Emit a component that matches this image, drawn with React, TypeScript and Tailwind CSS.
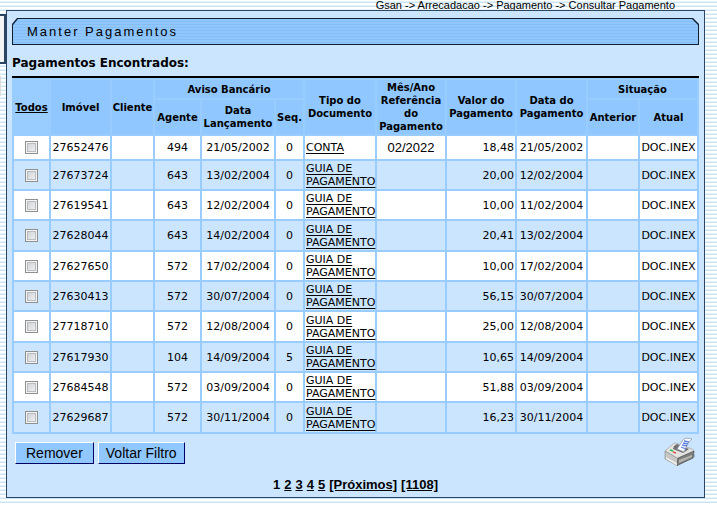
import { useState } from "react";

type Row = {
  imovel: string;
  agente: string;
  lancamento: string;
  seq: string;
  tipo: string;
  referencia: string;
  valor: string;
  data: string;
  atual: string;
};

const guia = "GUIA DE PAGAMENTO";
const make = (imovel: string, agente: string, lancamento: string, seq: string, tipo: string, referencia: string, valor: string, data: string): Row => ({
  imovel, agente, lancamento, seq, tipo, referencia, valor, data, atual: "DOC.INEX",
});

const rows: Row[] = [
  make("27652476", "494", "21/05/2002", "0", "CONTA", "02/2022", "18,48", "21/05/2002"),
  make("27673724", "643", "13/02/2004", "0", guia, "", "20,00", "12/02/2004"),
  make("27619541", "643", "12/02/2004", "0", guia, "", "10,00", "11/02/2004"),
  make("27628044", "643", "14/02/2004", "0", guia, "", "20,41", "13/02/2004"),
  make("27627650", "572", "17/02/2004", "0", guia, "", "10,00", "17/02/2004"),
  make("27630413", "572", "30/07/2004", "0", guia, "", "56,15", "30/07/2004"),
  make("27718710", "572", "12/08/2004", "0", guia, "", "25,00", "12/08/2004"),
  make("27617930", "104", "14/09/2004", "5", guia, "", "10,65", "14/09/2004"),
  make("27684548", "572", "03/09/2004", "0", guia, "", "51,88", "03/09/2004"),
  make("27629687", "572", "30/11/2004", "0", guia, "", "16,23", "30/11/2004"),
];

function TitleBar() {
  return (
    <div className="bg-[#10202f] p-px [clip-path:polygon(5px_0,calc(100%-6px)_0,100%_6px,100%_100%,0_100%,0_6px)]">
      <div className="bg-[repeating-linear-gradient(#90c7ff_0px,#90c7ff_2px,#86bdf5_2px,#86bdf5_3px)] pl-[14px] [clip-path:polygon(5px_0,calc(100%-6px)_0,100%_6px,100%_100%,0_100%,0_6px)]">
        <h1 className="text-[13px] leading-[25px] tracking-[2px]">Manter Pagamentos</h1>
      </div>
    </div>
  );
}

function Printer() {
  return (
    <svg width="32" height="30" viewBox="0 0 32 30" aria-hidden="true">
      <path d="M13 29 31 20v-3L12 25Z" fill="#7d93ab" opacity=".6" />
      <path d="M1 14 9 7q1-1 3-1l16 6q2 1 2 3L14 22Z" fill="#e3e3e1" stroke="#a2a2a2" strokeWidth=".7" />
      <path d="M1 14v8l12 6.500 1-7Z" fill="#c6c6c4" stroke="#8c8c8c" strokeWidth=".7" />
      <path d="M14 21 30 14l-1 7-16 7.500Z" fill="#7e7e7c" stroke="#555" strokeWidth=".7" />
      <path d="m15 23 13-5v2l-13 6Z" fill="#b5b5b2" />
      <path d="m2 20 11 6v2.500L2 22Z" fill="#ececea" />
      <path d="m10 9 3-2 12 5-6 4-10-4Z" fill="#6f7072" />
      <path d="m13 12 6-9q2-3 9-1-4 3-8 13Z" fill="#f7faff" stroke="#8a92a3" strokeWidth=".7" />
      <path d="m20 4 5 1m-6 1 5 1m-6 1 5 1m-6 1 5 2" stroke="#6385dd" strokeWidth="1.3" />
      <path d="m6 13 3 1" stroke="#2fba55" strokeWidth="1.8" />
      <path d="m9 15 3 1" stroke="#e2564a" strokeWidth="1.8" />
    </svg>
  );
}

const th = "bg-[#90c7ff] p-0 font-bold";
const button = "h-[22px] border border-t-white border-l-white border-r-[#000066] border-b-[#000066] bg-[#90c7ff] text-[14px] leading-5";

export default function App() {
  const [selected, setSelected] = useState<string[]>([]);
  const toggle = (id: string) =>
    setSelected((old) => (old.includes(id) ? old.filter((x) => x !== id) : [...old, id]));
  const toggleAll = () => setSelected((old) => (old.length === rows.length ? [] : rows.map((r) => r.imovel)));

  return (
    <div className="flex min-h-screen flex-col bg-[repeating-linear-gradient(#ffffff_0px,#ffffff_1px,#e8f4fa_1px,#e8f4fa_2px,#c8e4f3_2px,#c8e4f3_3px,#ffffff_3px,#ffffff_4px)] font-['Liberation_Sans',Arial,sans-serif] text-black">
      <nav aria-label="Localização" className="h-[10px] pr-[42px] text-right text-[11px] leading-[10px]">
        Gsan -&gt; Arrecadacao -&gt; Pagamento -&gt; Consultar Pagamento
      </nav>
      <div className="flex">
        <aside className="w-[6px] pt-1">
          <div className="h-[50px] border-y-2 border-r-2 border-[#2b4665] bg-[#f4f4f4]" />
          <div className="mt-3 h-5 w-px bg-[#dddddd]" />
        </aside>
        <main className="mr-3 min-w-0 flex-1 border border-[#2b4665] bg-[#cbe5ff] px-[5px] pt-[7px]">
          <TitleBar />
          <h2 className="mt-[10px] mb-1 font-['DejaVu_Sans',Verdana,sans-serif] text-[12px] leading-[17px] font-bold">Pagamentos Encontrados:</h2>
          <table className="w-full table-fixed border-separate border-spacing-[2px] border-t-2 border-black bg-[#99ccff] font-['DejaVu_Sans',Verdana,sans-serif] text-[11px] leading-[13px]">
            <colgroup>
              <col className="w-[35px]" />
              <col className="w-[59px]" />
              <col className="w-[41px]" />
              <col className="w-[45px]" />
              <col className="w-[72px]" />
              <col className="w-[27px]" />
              <col className="w-[70px]" />
              <col className="w-[68px]" />
              <col className="w-[68px]" />
              <col className="w-[69px]" />
              <col className="w-[50px]" />
              <col className="w-[57px]" />
            </colgroup>
            <thead className="text-[10px]">
              <tr className="h-[18px]">
                <th rowSpan={2} className="p-0">
                  <button type="button" onClick={toggleAll} className="font-bold underline">Todos</button>
                </th>
                <th rowSpan={2} className={th}>Imóvel</th>
                <th rowSpan={2} className={th}>Cliente</th>
                <th colSpan={3} className={th}>Aviso Bancário</th>
                <th rowSpan={2} className={th}>Tipo do Documento</th>
                <th rowSpan={2} className={th}>Mês/Ano Referência do Pagamento</th>
                <th rowSpan={2} className={th}>Valor do Pagamento</th>
                <th rowSpan={2} className={th}>Data do Pagamento</th>
                <th colSpan={2} className={th}>Situação</th>
              </tr>
              <tr className="h-[34px]">
                <th className={th}>Agente</th>
                <th className={th}>Data Lançamento</th>
                <th className={th}>Seq.</th>
                <th className={th}>Anterior</th>
                <th className={th}>Atual</th>
              </tr>
            </thead>
            <tbody className="[&_td]:p-0">
              {rows.map((r, i) => (
                <tr
                  key={r.imovel}
                  className={`${i === 0 ? "h-[23px]" : i % 3 === 0 ? "h-[29px]" : "h-[28px]"} ${i % 2 ? "bg-[#cbe5ff]" : "bg-white"}`}
                >
                  <td className="text-center">
                    <input
                      type="checkbox"
                      aria-label={`Selecionar ${r.imovel}`}
                      checked={selected.includes(r.imovel)}
                      onChange={() => toggle(r.imovel)}
                      className="mx-auto block size-[13px] appearance-none border border-[#8e8f8f] bg-linear-to-br from-[#c9cdd2] to-[#f6f6f6] shadow-[inset_0_0_0_1px_#f4f4f4,inset_0_0_0_2px_#b8bcc0] checked:from-[#3366aa] checked:to-[#3366aa]"
                    />
                  </td>
                  <td className="text-center">{r.imovel}</td>
                  <td />
                  <td className="text-center">{r.agente}</td>
                  <td className="text-center">{r.lancamento}</td>
                  <td className="text-center">{r.seq}</td>
                  <td><a href="#documento" className="ml-px block underline underline-offset-2">{r.tipo}</a></td>
                  <td className="text-center font-['Liberation_Sans',Arial,sans-serif] text-[13px]">{r.referencia}</td>
                  <td className="text-right"><span className="mr-px">{r.valor}</span></td>
                  <td className="text-center">{r.data}</td>
                  <td />
                  <td className="text-center">{r.atual}</td>
                </tr>
              ))}
            </tbody>
          </table>
          <div className="flex items-start justify-between px-[3px]">
            <div className="flex gap-1 pt-2">
              <button type="button" className={`${button} px-[10px]`}>Remover</button>
              <button type="button" className={`${button} px-[7px]`}>Voltar Filtro</button>
            </div>
            <button type="button" aria-label="Imprimir" className="pt-[3px]"><Printer /></button>
          </div>
          <nav aria-label="Páginas" className="mt-[10px] mb-1 flex justify-center gap-1 text-[13px] leading-4 font-bold">
            <span aria-current="page">1</span>
            {["2", "3", "4", "5", "[Próximos]", "[1108]"].map((p) => (
              <a key={p} href="#pagina" className="underline">{p}</a>
            ))}
          </nav>
        </main>
      </div>
    </div>
  );
}
